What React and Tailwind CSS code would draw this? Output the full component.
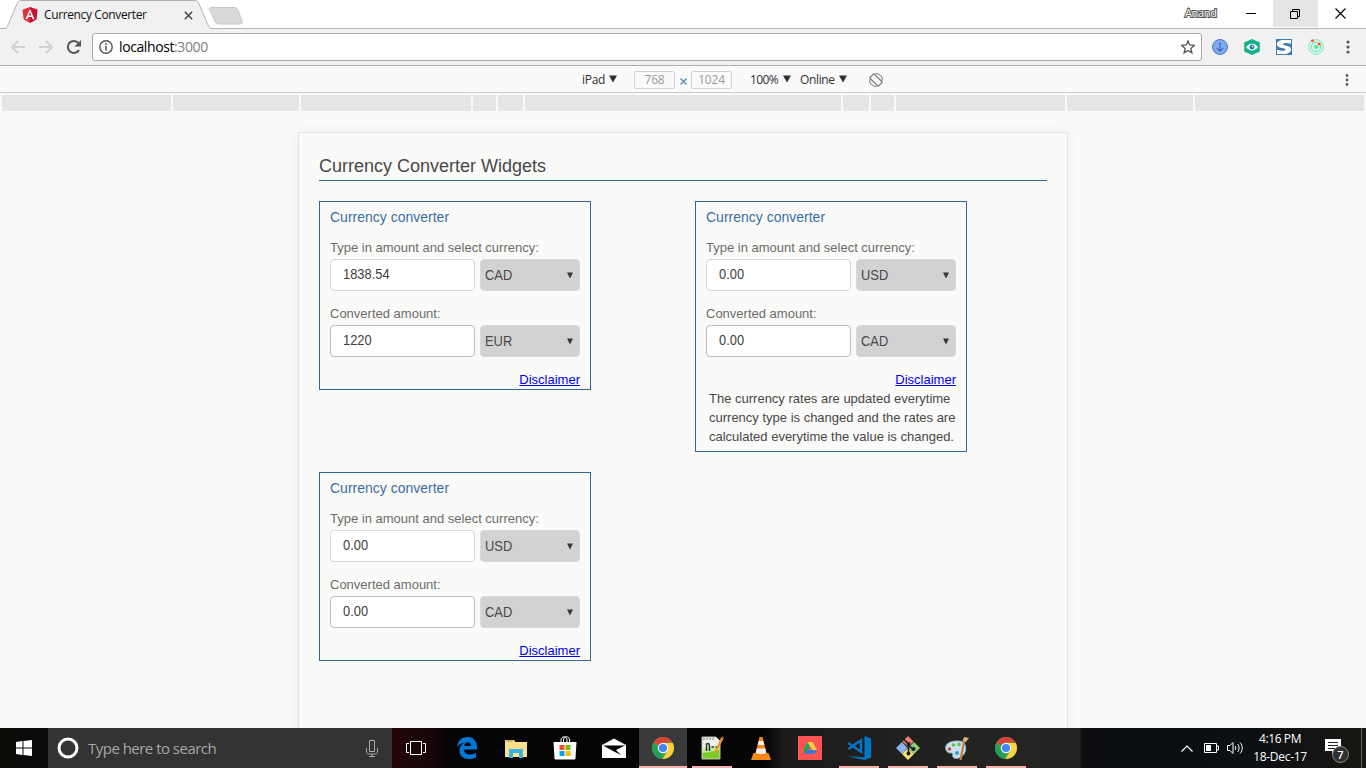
const SEGMENTS = [169, 126, 170, 23, 25, 316, 26, 23, 169, 126, 169];

function Shield() {
  return (
    <svg width="16" height="16" viewBox="0 0 16 16" className="shrink-0">
      <path d="M8 0 15.5 2.7 14.3 12.5 8 16 1.7 12.5.5 2.7z" fill="#dd3338" />
      <path d="M8 0 15.5 2.7 14.3 12.5 8 16z" fill="#c3002f" opacity=".7" />
      <path d="M8 2 3.4 12.2h1.8l.9-2.3h3.8l.9 2.3h1.8zM8 5.3l1.3 3.1H6.7z" fill="#fff" fillRule="evenodd" />
    </svg>
  );
}

function Dots() {
  return (
    <svg width="4" height="14" viewBox="0 0 4 14">
      <circle cx="2" cy="2" r="1.6" fill="#5a5a5a" />
      <circle cx="2" cy="7" r="1.6" fill="#5a5a5a" />
      <circle cx="2" cy="12" r="1.6" fill="#5a5a5a" />
    </svg>
  );
}

function TabStrip() {
  return (
    <div className="relative h-[29px] bg-white flex">
      <svg className="absolute left-0 top-0" width="1366" height="29">
        <path d="M0 28.5H1366" stroke="#b3b3b3" />
        <path d="M0 28.5H4C7 28.5 7 27 8 25L17 4C18 1.500 19 .5 21 .5H194C197 .5 198 1.500 199 4L208 25C209 27.500 210 28.500 212 28.500V29H0z" fill="#f1f1f1" />
        <path d="M0 28.500H4C7 28.500 7 27 8 25L17 4C18 1.500 19 .5 21 .5H194C197 .5 198 1.500 199 4L208 25C209 27.500 210 28.500 212 28.500" fill="none" stroke="#b0b0b0" />
        <path d="M211 7.500H234C236 7.500 237 8 238 10L242 21C242.500 23 242 24 240 24H219C217 24 216 23.500 215 22L209.500 9.500C209 8 209.500 7.500 211 7.500z" fill="#d9d9d9" stroke="#c8c8c8" />
      </svg>
      <div className="relative flex w-full items-start">
        <div className="flex items-center pl-[22px] pt-[7px] w-[200px]">
          <Shield />
          <span className="ml-1.5 w-[140px] whitespace-nowrap font-['Open_Sans',sans-serif] text-[12px] leading-4 tracking-[-0.38px] text-[#111]">Currency Converter</span>
          <svg width="9" height="9" viewBox="0 0 9 9"><path d="M.8.8 8.200 8.200M8.200.8.8 8.200" stroke="#4a4a4a" strokeWidth="1.600" /></svg>
        </div>
        <div className="ml-auto flex h-[27px] items-center">
          <span className="mr-[10px] w-[33px] whitespace-nowrap font-['Open_Sans',sans-serif] text-[11px] tracking-[-0.35px] text-white [-webkit-text-stroke:2px_#555] [paint-order:stroke_fill]">Anand</span>
          <div className="flex w-[45px] justify-center"><svg width="10" height="10"><path d="M0 4.500H10" stroke="#000" /></svg></div>
          <div className="flex h-full w-[45px] items-center justify-center bg-[#e5e5e5] pr-px">
            <svg width="10" height="10" fill="none" stroke="#000"><path d="M.5 2.500h7v7h-7zM2.500 2.500v-2h7v7h-2" /></svg>
          </div>
          <div className="flex w-[48px] justify-center pr-1"><svg width="11" height="11"><path d="M.5.500l10 10M10.500.500l-10 10" stroke="#000" strokeWidth="1.100" /></svg></div>
        </div>
      </div>
    </div>
  );
}

function Toolbar() {
  return (
    <div className="flex h-[37px] items-center border-b border-[#b0aeb0] bg-[#f1f1f1]">
      <svg width="92" height="36" viewBox="0 0 92 36" fill="none" className="shrink-0">
        <path d="M25 18H12.500M18 12l-6 6 6 6" stroke="#d0d0d0" strokeWidth="1.800" />
        <path d="M39 18h12.500M46 12l6 6-6 6" stroke="#d0d0d0" strokeWidth="1.800" />
        <path d="M79 21A6 6 0 1 1 78.500 14.200" stroke="#555" strokeWidth="2" />
        <path d="M81 11v6.500h-6.500z" fill="#555" />
      </svg>
      <div className="flex h-[28px] w-[1110px] items-center rounded-[3px] border border-[#a9a9a9] bg-white pl-[6px] pr-[6px]">
        <svg width="14" height="14" viewBox="0 0 14 14" fill="none"><circle cx="7" cy="7" r="6.200" stroke="#555" strokeWidth="1.400" /><path d="M7 6v4.500M7 3.300v1.600" stroke="#555" strokeWidth="1.600" /></svg>
        <span className="ml-[6px] font-['Open_Sans',sans-serif] text-[14px] leading-5 tracking-[-0.4px] text-black">localhost<span className="text-[#808080]">:3000</span></span>
        <svg className="ml-auto" width="14" height="14" viewBox="0 0 14 14"><path d="M7 .9 8.700 5l4.600.4-3.500 3 1.100 4.500L7 10.500l-3.900 2.400 1.100-4.500-3.500-3L5.300 5z" fill="none" stroke="#555" strokeWidth="1.300" /></svg>
      </div>
      <svg className="ml-[10px]" width="16" height="16" viewBox="0 0 16 16"><circle cx="8" cy="8" r="7.500" fill="#7daaf5" stroke="#5578b8" /><path d="M8 3.500v8.500M4.800 9 8 12.200 11.200 9" stroke="#4767a0" fill="none" strokeWidth="1.200" /></svg>
      <svg className="ml-[16px]" width="16" height="16" viewBox="0 0 16 16"><path d="M8 0 15.800 3.500v9L8 16 .2 12.500v-9z" fill="#14b187" /><path d="M2 8C5 3.500 11 3.500 14 8 11 12.500 5 12.500 2 8z" fill="#fff" /><circle cx="8" cy="8" r="2.500" fill="#1789a7" /><circle cx="8.600" cy="7.500" r=".7" fill="#fff" /></svg>
      <svg className="ml-[16px]" width="16" height="16" viewBox="0 0 16 16"><path d="M0 0h16v16H0z" fill="#3d7cae" /><path d="M15 1H7C3.500 1 1 2.800 1 5.200 1 8 4 8.600 7 9.200c2 .4 3 1 2.500 1.900C8.500 12.300 4 12 1 10.600V15h7c4.500 0 7-1.800 7-4.500 0-2.600-2.500-3.300-5.500-4C7.500 6 6.500 5.500 7 4.700 8 3.600 12 3.700 15 4.800z" fill="#fff" /></svg>
      <svg className="ml-[16px]" width="16" height="16" viewBox="0 0 16 16" fill="none" stroke="#67eebc"><circle cx="8" cy="8" r="7.300" /><circle cx="8" cy="8" r="4.700" strokeWidth="1.200" /><circle cx="8" cy="8" r="2" fill="#4eed91" /><circle cx="4.500" cy="1.800" r="1.500" fill="#ff5722" stroke="none" /><circle cx="11.300" cy="5" r="1.500" fill="#ff5722" stroke="none" /></svg>
      <div className="ml-[22px]"><Dots /></div>
    </div>
  );
}

function DeviceText({ className, children }) {
  return <span className={"shrink-0 whitespace-nowrap font-['Open_Sans',sans-serif] text-[12px] leading-4 text-[#303030] " + className}>{children}</span>;
}

function Caret() {
  return <svg className="mt-[-2px] shrink-0" width="8" height="8"><path d="M0 .500h8L4 7.500z" fill="#303030" /></svg>;
}

function DeviceBar() {
  return (
    <div className="flex h-[27px] items-center border-b border-[#ccc] bg-[#fafafa] pl-[582px] pt-px">
      <DeviceText className="w-[27px] tracking-[-0.3px]">iPad</DeviceText>
      <Caret />
      <div className="ml-[17px] flex h-[18px] w-[41px] shrink-0 items-center justify-center rounded-[2px] border border-[#d4d4d4]"><DeviceText className="tracking-[-0.2px] text-[#9a9a9a]!">768</DeviceText></div>
      <svg className="ml-[5px] mr-[4px] mt-1" width="7" height="7"><path d="M.5.500l6 6M6.500.500l-6 6" stroke="#4d8fb5" strokeWidth="1.300" /></svg>
      <div className="flex h-[18px] w-[41px] shrink-0 items-center justify-center rounded-[2px] border border-[#d4d4d4]"><DeviceText className="tracking-[-0.2px] text-[#9a9a9a]!">1024</DeviceText></div>
      <DeviceText className="ml-[18px] w-[33px] tracking-[-0.6px]">100%</DeviceText>
      <Caret />
      <DeviceText className="ml-[9px] w-[39px] tracking-[-0.35px]">Online</DeviceText>
      <Caret />
      <svg className="ml-[22px]" width="14" height="14" viewBox="0 0 14 14" fill="none" stroke="#6e6e6e"><rect x="4" y="1" width="6" height="12" rx="1" transform="rotate(-45 7 7)" strokeWidth="1.200" /><path d="M6.500.6A6.400 6.400 0 0 1 13.400 7.500M7.500 13.400A6.400 6.400 0 0 1 .6 6.500" /></svg>
      <div className="ml-auto mr-[17px] scale-90"><Dots /></div>
    </div>
  );
}

function Field({ label, value, code, strong }) {
  return (
    <div>
      <div className="h-[23px] whitespace-nowrap text-[13px] leading-[23px] text-[#6c6c6c]">{label}</div>
      <div className="flex gap-[5px]">
        <div className={"h-8 w-[145px] rounded-[4px] border bg-white pl-[12px] text-[14px] leading-[29px] " + (strong ? "border-[#bdbdbd]" : "border-[#d8d8d8]")}>
          <span className="inline-block origin-left scale-x-[0.92] text-[#404040]">{value}</span>
        </div>
        <div className="flex h-8 w-[100px] items-center justify-between rounded-[4px] border border-[#dadada] bg-[#d2d2d2] pl-1 pr-[6px] text-[14px] text-[#484848]">
          <span className="origin-left scale-x-[0.92]">{code}</span>
          <svg width="6" height="7"><path d="M0 .500h6L3 6.500z" fill="#353535" /></svg>
        </div>
      </div>
    </div>
  );
}

function Converter({ amount, from, converted, to, open }) {
  return (
    <div className="w-[272px] self-start border border-[#336699] px-[10px] font-['Liberation_Sans',Arial,sans-serif]">
      <h2 className="h-[34px] pt-[5px] text-[14px] leading-[20px] text-[#3a6da5]">Currency converter</h2>
      <Field label="Type in amount and select currency:" value={amount} code={from} />
      <div className="h-[11px]" />
      <Field label="Converted amount:" value={converted} code={to} strong />
      <div className="h-[32px] pt-[13px] text-right text-[13px] leading-[19px]"><a className="text-[#0000ee] underline">Disclaimer</a></div>
      {open && (
        <div className="ml-[3px] h-[62px] whitespace-nowrap text-[13px] leading-[19px] text-[#484848]">
          <p>The currency rates are updated everytime</p>
          <p>currency type is changed and the rates are</p>
          <p>calculated everytime the value is changed.</p>
        </div>
      )}
    </div>
  );
}

function Chrome() {
  return (
    <svg width="22" height="22" viewBox="0 0 22 22">
      <circle cx="11" cy="11" r="11" fill="#34a853" />
      <path d="M11 11 1.500 5.500A11 11 0 0 1 20.500 5.500H11z" fill="#dc4437" />
      <path d="M11 6h9.800A11 11 0 0 1 10.500 22l5-8.500z" fill="#fdd23c" />
      <path d="M1.500 5.500 6.500 13.500 11 16l-2 5.800A11 11 0 0 1 1.500 5.500z" fill="#239d58" />
      <circle cx="11" cy="11" r="5.200" fill="#fff" /><circle cx="11" cy="11" r="4.100" fill="#4285f4" />
    </svg>
  );
}

const ICONS = [
  { name: "edge", art: <svg width="20" height="22" viewBox="0 0 20 22"><path d="M0 10C1 3 5 0 10.500 0 17 0 20 5 20 10v2.500H7C7 16 9.500 17.500 13 17.500c2.500 0 4.500-.7 6-1.500v4.500c-2 1-4.500 1.500-7 1.500C6 22 2.500 18.500 2.500 13.500 2.500 9.500 5 7 8 5.500 4.500 6 2 7.500 0 10zM7.200 9h6.900C14 6.500 12.800 5.300 10.800 5.300S7.500 6.800 7.200 9z" fill="#0078d7" fillRule="evenodd" /></svg> },
  { name: "files", art: <svg width="22" height="19" viewBox="0 0 22 19"><path d="M0 1h9l1.500 2H22v15H0z" fill="#fce08a" /><path d="M1 1h7v2H1z" fill="#f2b431" /><path d="M2.500 1.500h3v1h-3z" fill="#5ac1e8" /><path d="M4 10h14v9h-4v-5H8v5H4z" fill="#3db0e5" /></svg> },
  { name: "store", art: <svg width="24" height="24" viewBox="0 0 24 24"><path d="M8 7V4c0-2 1.500-3.200 3-3.200S14 2 14 4v3M10.500 7V4c0-2 1.500-3.200 3-3.200s3 1.200 3 3.200v3" fill="none" stroke="#fff" strokeWidth="1" /><path d="M.5 6h23l-1 16c0 1-.5 1.500-1.500 1.500H3C2 23.500 1.500 23 1.500 22z" fill="#fff" /><path d="M6.500 9h5v5h-5z" fill="#f25022" /><path d="M12.500 9h5v5h-5z" fill="#7fba00" /><path d="M6.500 15h5v5h-5z" fill="#00a4ef" /><path d="M12.500 15h5v5h-5z" fill="#ffb900" /></svg> },
  { name: "mail", art: <svg width="24" height="20" viewBox="0 0 24 20"><path d="M0 7 12 .500 24 7v13H0z" fill="#fff" /><path d="M1 7.500h22L14 12l5 5-7-3.500z" fill="#050505" /></svg> },
  { name: "chrome", art: <Chrome />, running: true, active: true },
  { name: "notepad", running: true, art: <svg width="24" height="24" viewBox="0 0 24 24"><path d="M2 1h14l4 4v18H2z" fill="#edf2e9" stroke="#b5bab0" /><path d="M2.500 15 19.500 12v10.500h-17z" fill="#7ccc27" /><path d="M2.500 12 19.500 10v4l-17 3z" fill="#c6eca4" /><path d="M4 2v2M7 2v2M10 2v2M13 2v2" stroke="#777" /><path d="M6.500 15V8c3-1.500 3 0 3 7M11.500 11h2.500M15.500 11h2.500" fill="none" stroke="#283528" strokeWidth="1.500" /><path d="M22.500 1.500 15 17" stroke="#e69c30" strokeWidth="2.500" /><path d="M22 1 23.500 2" stroke="#b73c35" strokeWidth="2" /></svg> },
  { name: "player", art: <svg width="20" height="23" viewBox="0 0 20 23"><path d="M2.500 16h15L20 23H0z" fill="#f58a16" /><path d="M8.500 0h3l4.500 18c-2 2-10 2-12 0z" fill="#f58410" /><path d="M7.600 4h4.800l1 4H6.600zM5.700 11.500h8.600l1 4.500c-3 1.500-7.600 1.500-10.600 0z" fill="#eee" /></svg> },
  { name: "drive", art: <svg width="24" height="24" viewBox="0 0 24 24"><path d="M0 0h24v24H0z" fill="#ff5252" /><path d="M9.500 6h5L9 16l-2 2-1.500-4z" fill="#11a861" /><path d="M9.500 6h5L19 14h-5z" fill="#ffcf43" /><path d="M9.500 14H19l-2.500 4H7z" fill="#3777e3" /><path d="M12 10.500 14 14h-4z" fill="#ff5252" /></svg> },
  { name: "code", running: true, art: <svg width="24" height="24" viewBox="0 0 24 24"><path d="M17.500 0 24 2.500v19L17.500 24 0 20.300l17.500 1z" fill="#0076c6" /><path d="M1.300 7 14 15.800V4.200L1.300 13" fill="none" stroke="#0076c6" strokeWidth="2.300" /></svg> },
  { name: "git", running: true, art: <svg width="24" height="24" viewBox="0 0 24 24"><path d="M12 0 17.500 5.500 12 11 6.500 5.500z" fill="#f47c76" /><path d="M6 6 11.500 12 6 18 0 12z" fill="#87b3f4" /><path d="M18 6 24 12 18 18 12 12z" fill="#8bcf77" /><path d="M12 12 18 18 12 24 6 18z" fill="#f4df74" /><path d="M8 3.500 12.500 8v10M12.500 9l5 5" fill="none" stroke="#202020" strokeWidth="1.700" /><circle cx="12.500" cy="8" r="2" fill="#202020" /><circle cx="12.500" cy="17.500" r="2" fill="#202020" /><circle cx="17.500" cy="13" r="2" fill="#202020" /></svg> },
  { name: "paint", running: true, art: <svg width="24" height="24" viewBox="0 0 24 24"><path d="M1 14C-1 8 5 5 12 5c8-1 10 6 8 11-2 6-10 8-12 5-1-2 1-4-2-4-3 0-4-1-5-3z" fill="#c7e2f0" stroke="#93b6c9" /><circle cx="4.500" cy="13" r="1.700" fill="#d63f36" /><circle cx="8.500" cy="9" r="1.800" fill="#70b944" /><circle cx="14" cy="8.500" r="1.800" fill="#63bd45" /><circle cx="12" cy="17" r="2" fill="#3796d2" /><path d="M19.500 4 15.500 24" stroke="#c97b32" strokeWidth="2.200" /><path d="M17.500 5 19 1l5 1-3 4z" fill="#d7b17e" /></svg> },
  { name: "chrome2", art: <Chrome />, running: true },
];

function Taskbar() {
  return (
    <div className="flex h-10 shrink-0 bg-[linear-gradient(90deg,#0b0c08_0,#090b0b_48px,#240708_392px,#150607_435px,#050505_446px,#050505_765px,#1c1c1c_785px,#242423_1030px,#222_1079px,#0c0e10_1082px,#0c0f13_1250px,#181712_1366px)]">
      <div className="flex w-12 shrink-0 items-center justify-center"><svg width="16" height="16" viewBox="0 0 16 16"><path d="M0 2 6.500 1.100v6.400H0zM7.500 1 16 0v7.500H7.500zM0 8.500h6.500v6.400L0 14zM7.500 8.500H16V16l-8.500-1z" fill="#fff" /></svg></div>
      <div className="flex w-[344px] shrink-0 items-center bg-[#333] pl-[9px] pr-[14px]">
        <svg width="22" height="22"><circle cx="11" cy="11" r="9" fill="none" stroke="#fff" strokeWidth="3" /></svg>
        <span className="ml-[9px] whitespace-nowrap font-['Open_Sans',sans-serif] text-[15px] tracking-[-0.52px] text-[#a6a6a6]">Type here to search</span>
        <svg className="ml-auto" width="12" height="17" fill="none" stroke="#aaa"><path d="M3.500.500h5v11h-5zM.5 8v4.500c0 1 1 1.500 2 1.500h7c1 0 2-.500 2-1.500V8M6 14v2.500M3 16.500h6" /></svg>
      </div>
      <div className="flex w-[47px] shrink-0 items-center justify-center"><svg width="20" height="14" fill="none" stroke="#fff"><path d="M4.500.500h11v13h-11zM3 2.500H.5v9H3M17 2.500h2.500v9H17" /></svg></div>
      <div className="flex gap-px pl-1">
        {ICONS.map((icon) => (
          <div key={icon.name} className={"flex h-10 w-12 shrink-0 flex-col items-center " + (icon.active ? "bg-[#3a3a3a]" : "")}>
            <div className="flex h-[38px] items-center pt-[2px]">{icon.art}</div>
            <div className={"h-[2px] " + (icon.active ? "w-12 " : "w-10 ") + (icon.running ? "bg-[#ffb0ae]" : "")} />
          </div>
        ))}
      </div>
      <div className="ml-auto flex items-center text-white">
        <svg width="12" height="7" fill="none" stroke="#fff" strokeWidth="1.200"><path d="M.5 6.500 6 1l5.500 5.500" /></svg>
        <svg className="ml-[11px]" width="15" height="10" fill="none" stroke="#fff"><path d="M.5.500h12v9H.5zM12.500 3h2v4h-2" /><path d="M2 2h5v6H2z" fill="#fff" stroke="none" /></svg>
        <svg className="ml-[8px]" width="18" height="14" viewBox="0 0 18 14" fill="none" stroke="#fff"><path d="M.5 4.500H3l3-3v11l-3-3H.5zM8 5c1 1 1 3 0 4M10.500 3c2 2 2 6 0 8M13 1.500c3 3 3 8 0 11" /></svg>
        <div className="ml-[7px] w-[56px] whitespace-nowrap text-center font-['Open_Sans',sans-serif] text-[12px] leading-[18px]"><div className="tracking-[-0.4px]">4:16 PM</div><div className="tracking-[-0.3px]">18-Dec-17</div></div>
        <svg className="ml-[17px] mt-[8px]" width="26" height="27" viewBox="0 0 26 27"><path d="M0 0h16v12h-5l-4 4v-4H0z" fill="#fff" /><path d="M3 3.500h10M3 6.500h10M3 9.500h7" stroke="#222" /><circle cx="15.500" cy="15.500" r="8" fill="#303030" stroke="#888" /><text x="15.500" y="19.500" textAnchor="middle" fill="#fff" fontFamily="Open Sans" fontSize="11" fontWeight="600">7</text></svg>
        <div className="ml-[10px] h-10 w-[5px] border-l border-[#5f5f5f]" />
      </div>
    </div>
  );
}

export default function App() {
  return (
    <div className="flex h-[768px] w-[1366px] flex-col overflow-hidden bg-[#fafafa]">
      <TabStrip />
      <Toolbar />
      <DeviceBar />
      <div className="flex h-[17px] shrink-0 gap-[2px] bg-[#fafafa] px-[2px] pt-[2px]">
        {SEGMENTS.map((width, i) => <div key={i} className="h-[16px] shrink-0 bg-[#e5e5e5]" style={{ width }} />)}
      </div>
      <main className="flex min-h-0 flex-1 justify-center overflow-hidden pt-[22px]">
        <div className="h-[700px] w-[770px] shrink-0 border border-[#e3e3e3] bg-[#fafaf8] px-5 pt-[20px] font-['Liberation_Sans',Arial,sans-serif] shadow-[0_0_15px_rgba(0,0,0,0.05)]">
          <h1 className="mb-5 h-[28px] whitespace-nowrap border-b border-[#336699] text-[18px] leading-[26px] text-[#484848]">Currency Converter Widgets</h1>
          <div className="grid grid-cols-[356px_272px] gap-5">
            <Converter amount="1838.54" from="CAD" converted="1220" to="EUR" />
            <Converter amount="0.00" from="USD" converted="0.00" to="CAD" open />
            <Converter amount="0.00" from="USD" converted="0.00" to="CAD" />
          </div>
        </div>
      </main>
      <Taskbar />
    </div>
  );
}
